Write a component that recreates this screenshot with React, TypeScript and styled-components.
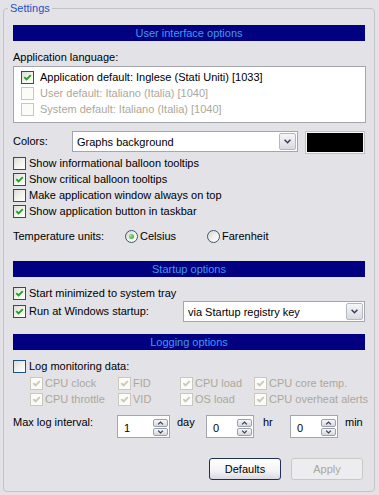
import React from "react";
import styled, { createGlobalStyle } from "styled-components";

const FONT = `"Liberation Sans", Arial, sans-serif`;
const FACE = "#E3E2E7";

const GlobalStyle = createGlobalStyle`
  html, body { margin: 0; padding: 0; background: ${FACE}; }
  body { font-family: ${FONT}; font-size: 11px; color: #000; }
  * { box-sizing: border-box; }
`;

const Page = styled.div`
  width: 379px;
  height: 495px;
  padding-top: 8px;
  background: ${FACE};
  overflow: hidden;
`;

const Group = styled.section`
  position: relative;
  margin: 0 4px 0 3px;
  height: 484px;
  border: 1px solid #c3c2c9;
  border-radius: 4px;
  padding: 16px 8px 0 9px;
  display: flex;
  flex-direction: column;
`;

const Legend = styled.div`
  position: absolute;
  top: -7px;
  left: 4px;
  padding: 0 2px;
  background: ${FACE};
  color: #2152c8;
  line-height: 13px;
`;

const Header = styled.div<{ $mt?: number }>`
  margin-top: ${(p) => p.$mt ?? 0}px;
  margin-right: 1px;
  height: 16px;
  line-height: 16px;
  background: #000080;
  color: #3d9bf5;
  text-align: center;
  white-space: nowrap;
`;

const Text = styled.div<{ $mt?: number }>`
  margin-top: ${(p) => p.$mt ?? 0}px;
  line-height: 13px;
  white-space: nowrap;
`;

const ListBox = styled.div`
  margin-top: 2px;
  height: 57px;
  border: 1px solid #a3a6ad;
  background: #fff;
  padding: 2px 0 0 7px;
  display: flex;
  flex-direction: column;
`;

const Row = styled.div<{ $mt?: number; $h?: number; $gap?: number; $top?: boolean }>`
  margin-top: ${(p) => p.$mt ?? 0}px;
  height: ${(p) => p.$h ?? 16}px;
  display: flex;
  align-items: ${(p) => (p.$top ? "flex-start" : "center")};
  gap: ${(p) => p.$gap ?? 0}px;
  white-space: nowrap;
`;

const Caption = styled.span<{ $w?: number; $lh?: number; $disabled?: boolean; $pl?: number; $mt?: number }>`
  flex: none;
  ${(p) => (p.$w ? `width: ${p.$w}px;` : "")}
  padding-left: ${(p) => p.$pl ?? 0}px;
  margin-top: ${(p) => p.$mt ?? 0}px;
  line-height: ${(p) => p.$lh ?? 13}px;
  color: ${(p) => (p.$disabled ? "#aca899" : "#000")};
  white-space: nowrap;
`;

const BoxEl = styled.span<{ $disabled?: boolean }>`
  flex: none;
  width: 13px;
  height: 13px;
  border: 1px solid ${(p) => (p.$disabled ? "#cac8bb" : "#1c5180")};
  background: ${(p) =>
    p.$disabled
      ? "#fbfbf8"
      : "linear-gradient(135deg, #dcdcd7 0%, #f3f3ef 55%, #ffffff 100%)"};
  display: inline-flex;
  align-items: center;
  justify-content: center;
`;

const Check: React.FC<{ checked?: boolean; disabled?: boolean }> = ({ checked, disabled }) => (
  <BoxEl $disabled={disabled}>
    {checked && (
      <svg width="9" height="9" viewBox="0 0 9 9">
        <path
          d="M1.3 4.2 L3.5 6.4 L7.8 2.1"
          fill="none"
          stroke={disabled ? "#cac8bb" : "#21a121"}
          strokeWidth="1.9"
        />
      </svg>
    )}
  </BoxEl>
);

const CheckItem: React.FC<{
  label: string;
  checked?: boolean;
  disabled?: boolean;
  gap?: number;
  mt?: number;
  h?: number;
  children?: React.ReactNode;
}> = ({ label, checked, disabled, gap = 3, mt, h, children }) => (
  <Row $gap={gap} $mt={mt} $h={h}>
    <Check checked={checked} disabled={disabled} />
    <Caption $disabled={disabled}>{label}</Caption>
    {children}
  </Row>
);

const Combo = styled.div<{ $w: number; $push?: boolean }>`
  flex: none;
  width: ${(p) => p.$w}px;
  margin-left: ${(p) => (p.$push ? "auto" : "0")};
  margin-right: ${(p) => (p.$push ? "1px" : "0")};
  height: 21px;
  border: 1px solid #a3a6ad;
  background: #fff;
  display: flex;
  align-items: center;
  padding: 0 1px 0 4px;
`;

const ComboText = styled.span`
  flex: 1;
  white-space: nowrap;
  overflow: hidden;
`;

const DropBtn = styled.span`
  flex: none;
  width: 17px;
  height: 17px;
  border: 1px solid #b3b8c4;
  border-radius: 2px;
  background: linear-gradient(#f6f6f8, #d9dae1);
  display: flex;
  align-items: center;
  justify-content: center;
`;

const Chevron: React.FC<{ up?: boolean; size?: number }> = ({ up, size = 9 }) => (
  <svg width={size} height={Math.round(size * 0.6)} viewBox="0 0 9 6">
    <path
      d={up ? "M1 5 L4.5 1.6 L8 5" : "M1 1 L4.5 4.4 L8 1"}
      fill="none"
      stroke="#343c4e"
      strokeWidth="1.8"
    />
  </svg>
);

const Swatch = styled.div`
  flex: none;
  margin-left: 7px;
  width: 60px;
  height: 23px;
  background: #000;
  border: 1px solid #c0c0c6;
  box-shadow: inset 0 0 0 1px #f7f7f7;
`;

const RadioEl = styled.span`
  flex: none;
  width: 13px;
  height: 13px;
  border-radius: 50%;
  border: 1px solid #3a5674;
  background: linear-gradient(135deg, #d8d8d3 0%, #f4f4f0 60%, #ffffff 100%);
  display: inline-flex;
  align-items: center;
  justify-content: center;
`;

const Dot = styled.span`
  width: 5px;
  height: 5px;
  border-radius: 50%;
  background: radial-gradient(circle at 35% 35%, #9ee49a, #1f9c1f);
`;

const RadioItem = styled.span<{ $w?: number }>`
  flex: none;
  ${(p) => (p.$w ? `width: ${p.$w}px;` : "")}
  display: inline-flex;
  align-items: center;
  gap: 2px;
`;

const SubGrid = styled.div`
  margin-top: 1px;
  padding-left: 17px;
  display: grid;
  grid-template-columns: 88px 62px 74px 1fr;
  grid-auto-rows: 16px;
`;

const Spin = styled.div<{ $w: number }>`
  flex: none;
  width: ${(p) => p.$w}px;
  height: 23px;
  border: 1px solid #a3a6ad;
  background: #fff;
  display: flex;
  align-items: center;
  padding: 0 1px 0 6px;
`;

const SpinValue = styled.span`
  flex: 1;
  padding-top: 2px;
`;

const SpinBtns = styled.span`
  flex: none;
  display: flex;
  flex-direction: column;
  gap: 1px;
  margin-top: 1px;
`;

const SpinBtn = styled.span`
  width: 15px;
  height: 8px;
  border: 1px solid #9aa0ae;
  border-radius: 2px;
  background: linear-gradient(#f7f7f9, #d6d7de);
  display: flex;
  align-items: center;
  justify-content: center;
`;

const SpinBox: React.FC<{ w: number; value: string }> = ({ w, value }) => (
  <Spin $w={w}>
    <SpinValue>{value}</SpinValue>
    <SpinBtns>
      <SpinBtn>
        <Chevron up size={7} />
      </SpinBtn>
      <SpinBtn>
        <Chevron size={7} />
      </SpinBtn>
    </SpinBtns>
  </Spin>
);

const Buttons = styled.div`
  margin-top: 20px;
  margin-right: 3px;
  display: flex;
  justify-content: flex-end;
  gap: 10px;
`;

const Btn = styled.button`
  width: 72px;
  height: 22px;
  padding: 0;
  font: inherit;
  font-size: 11px;
  color: #000;
  border: 1px solid #1f2f5e;
  border-radius: 3px;
  background: linear-gradient(#ffffff 0%, #f3f3f6 60%, #d9d9e2 100%);

  &:disabled {
    color: #aca899;
    border-color: #c9c8c6;
    background: #ededf0;
  }
`;

export default function App() {
  return (
    <Page>
      <GlobalStyle />
      <Group>
        <Legend>Settings</Legend>

        <Header>User interface options</Header>
        <Text $mt={10}>Application language:</Text>
        <ListBox>
          <CheckItem label="Application default: Inglese (Stati Uniti) [1033]" checked gap={6} />
          <CheckItem label="User default: Italiano (Italia) [1040]" disabled gap={6} />
          <CheckItem label="System default: Italiano (Italia) [1040]" disabled gap={6} />
        </ListBox>

        <Row $mt={8} $h={23} $top>
          <Caption $w={59} $lh={21}>Colors:</Caption>
          <Combo $w={226}>
            <ComboText>Graphs background</ComboText>
            <DropBtn>
              <Chevron />
            </DropBtn>
          </Combo>
          <Swatch />
        </Row>

        <CheckItem mt={1} label="Show informational balloon tooltips" />
        <CheckItem label="Show critical balloon tooltips" checked />
        <CheckItem label="Make application window always on top" />
        <CheckItem label="Show application button in taskbar" checked />

        <Row $mt={9}>
          <Caption $w={112}>Temperature units:</Caption>
          <RadioItem $w={82}>
            <RadioEl>
              <Dot />
            </RadioEl>
            <Caption>Celsius</Caption>
          </RadioItem>
          <RadioItem>
            <RadioEl />
            <Caption>Farenheit</Caption>
          </RadioItem>
        </Row>

        <Header $mt={17}>Startup options</Header>
        <CheckItem mt={8} label="Start minimized to system tray" checked />
        <CheckItem h={21} label="Run at Windows startup:" checked>
          <Combo $w={182} $push>
            <ComboText>via Startup registry key</ComboText>
            <DropBtn>
              <Chevron />
            </DropBtn>
          </Combo>
        </CheckItem>

        <Header $mt={12}>Logging options</Header>
        <CheckItem mt={8} label="Log monitoring data:" />
        <SubGrid>
          <CheckItem label="CPU clock" checked disabled gap={2} />
          <CheckItem label="FID" checked disabled gap={2} />
          <CheckItem label="CPU load" checked disabled gap={2} />
          <CheckItem label="CPU core temp." checked disabled gap={2} />
          <CheckItem label="CPU throttle" checked disabled gap={2} />
          <CheckItem label="VID" checked disabled gap={2} />
          <CheckItem label="OS load" checked disabled gap={2} />
          <CheckItem label="CPU overheat alerts" checked disabled gap={2} />
        </SubGrid>

        <Row $mt={8} $h={23} $top>
          <Caption $w={104} $mt={1}>Max log interval:</Caption>
          <SpinBox w={53} value="1" />
          <Caption $w={36} $pl={7} $mt={1}>day</Caption>
          <SpinBox w={48} value="0" />
          <Caption $w={36} $pl={9} $mt={1}>hr</Caption>
          <SpinBox w={48} value="0" />
          <Caption $pl={7} $mt={1}>min</Caption>
        </Row>

        <Buttons>
          <Btn>Defaults</Btn>
          <Btn disabled>Apply</Btn>
        </Buttons>
      </Group>
    </Page>
  );
}
